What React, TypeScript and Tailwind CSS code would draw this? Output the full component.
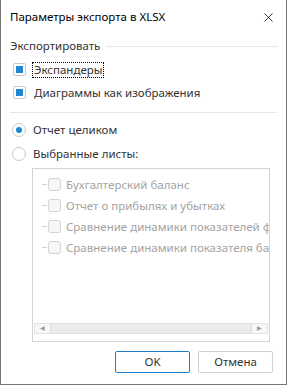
import { X } from 'lucide-react';

const sheets = [
  'Бухгалтерский баланс',
  'Отчет о прибылях и убытках',
  'Сравнение динамики показателей финансовых результатов',
  'Сравнение динамики показателя баланса',
];

function Check({ label, focused }: { label: string; focused?: boolean }) {
  return (
    <div className="flex h-[23px] items-center gap-[7px] pl-[12px]">
      <span className="flex h-[13px] w-[13px] items-center justify-center rounded-[2px] border border-[#c8c8c8] bg-white">
        <span className="h-[7px] w-[7px] bg-[#1e88d3]" />
      </span>
      <span className={focused ? 'outline-1 outline-dotted outline-black px-[1px] leading-[14px]' : 'px-[1px]'}>{label}</span>
    </div>
  );
}

function Radio({ label, checked }: { label: string; checked?: boolean }) {
  return (
    <div className="flex h-[24px] items-center gap-[7px] pl-[11px]">
      <span className="flex h-[14px] w-[14px] items-center justify-center rounded-full border border-[#c8c8c8] bg-white">
        {checked && <span className="h-[6px] w-[6px] rounded-full bg-[#1e88d3]" />}
      </span>
      <span>{label}</span>
    </div>
  );
}

export default function App() {
  return (
    <div className="flex h-[385px] w-[287px] flex-col border-x border-b border-[#777] bg-white font-['Segoe_UI','Noto_Sans',sans-serif] text-[11.5px] text-[#333]">
      <header className="flex h-[34px] shrink-0 items-center justify-between pl-[9px] pr-[10px]">
        <span className="text-[11.5px] text-black">Параметры экспорта в XLSX</span>
        <X size={15} strokeWidth={1.2} className="text-black" />
      </header>

      <div className="flex h-[24px] shrink-0 items-center gap-[6px] pl-[9px] pr-[8px]">
        <span>Экспортировать</span>
        <span className="h-px flex-1 bg-[#e6e6e6]" />
      </div>
      <Check label="Экспандеры" focused />
      <Check label="Диаграммы как изображения" />
      <div className="mx-[9px] mt-[8px] h-px shrink-0 bg-[#e6e6e6]" />
      <div className="mt-[5px]">
        <Radio label="Отчет целиком" checked />
        <Radio label="Выбранные листы:" />
      </div>

      <div className="ml-[31px] mr-[16px] mt-[2px] flex h-[174px] shrink-0 flex-col border border-[#d4d4d4] text-[#a3a3a3]">
        <div className="flex-1 overflow-hidden pt-[5px]">
          {sheets.map((s) => (
            <div key={s} className="flex h-[21px] items-center whitespace-nowrap pl-[9px]">
              <span className="mr-[1px] h-px w-[5px] shrink-0 bg-[#d0d0d0]" />
              <span className="mr-[5px] h-[13px] w-[13px] shrink-0 rounded-[3px] border border-[#d4d4d4] bg-[#f7f7f7]" />
              <span>{s}</span>
            </div>
          ))}
        </div>
        <div className="mx-[1px] mb-[7px] flex h-[11px] items-center border border-[#e2e2e2] bg-[#f0f0f0]">
          <span className="flex h-full w-[16px] items-center justify-center border-r border-[#dcdcdc] bg-[#f7f7f7] text-[6px] text-[#999]">◀</span>
          <span className="h-full flex-1 bg-[#ebebeb]" />
          <span className="flex h-full w-[16px] items-center justify-center border-l border-[#dcdcdc] bg-[#f7f7f7] text-[6px] text-[#999]">▶</span>
        </div>
      </div>

      <div className="mt-[9px] flex justify-end gap-[8px] pr-[13px]">
        <button className="h-[22px] w-[75px] rounded-[2px] border border-[#1e7ec8] bg-white text-[#333]">OK</button>
        <button className="h-[22px] w-[75px] rounded-[2px] border border-[#d0d0d0] bg-white text-[#333]">Отмена</button>
      </div>
    </div>
  );
}
